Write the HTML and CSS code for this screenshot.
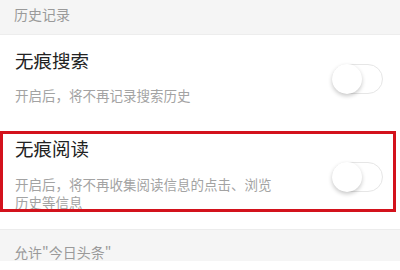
FILE: index.html
```html
<!DOCTYPE html>
<html lang="zh-CN">

<head>
  <meta charset="UTF-8">
  <title>历史记录</title>
  <link rel="stylesheet" href="styles.css">
</head>

<body>
  <div class="page">
    <div class="group-title">历史记录</div>
    <div class="list">
      <div class="item">
        <div class="item-text">
          <div class="item-name">无痕搜索</div>
          <div class="item-desc">开启后，将不再记录搜索历史</div>
        </div>
        <div class="switch"><span class="knob"></span></div>
      </div>
      <div class="item item-last">
        <div class="item-text">
          <div class="item-name">无痕阅读</div>
          <div class="item-desc">开启后，将不再收集阅读信息的点击、浏览历史等信息</div>
        </div>
        <div class="switch"><span class="knob"></span></div>
      </div>
      <!-- 标注框 -->
      <div class="mark"></div>
    </div>
    <div class="group-title group-bottom">允许&quot;今日头条&quot;</div>
  </div>
</body>

</html>
```

FILE: styles.css
```css
* {
  margin: 0;
  padding: 0;
  box-sizing: border-box;
}

body {
  background-color: #fff;
  font-family: "Noto Sans CJK SC", "Noto Sans", sans-serif;
}

.page {
  width: 400px;
  height: 270px;
  overflow: hidden;
}

.group-title {
  height: 35px;
  padding: 0 14px;
  line-height: 28px;
  font-size: 14px;
  color: #9a9a9a;
  background-color: #f5f5f5;
  border-bottom: 1px solid #ededed;
}

.group-bottom {
  height: auto;
  padding-top: 13px;
  line-height: 18px;
  border-bottom: none;
  border-top: 1px solid #ececec;
}

.list {
  position: relative;
  background-color: #fff;
}

.item {
  display: flex;
  align-items: center;
  padding: 13px 17px 27px 15px;
}

.item-last {
  padding-top: 5px;
  padding-bottom: 18px;
}

.item-last .item-desc {
  margin-top: 15px;
}

.item-text {
  flex: 1;
}

.item-name {
  font-size: 18.5px;
  line-height: 24px;
  color: #222;
}

.item-desc {
  width: 264px;
  margin-top: 14px;
  font-size: 13.5px;
  line-height: 18px;
  color: #a3a3a3;
}

.switch {
  position: relative;
  width: 51px;
  height: 30px;
  margin-top: 6px;
  border: 1px solid #e6e6e6;
  border-radius: 15px;
  background-color: #fff;
}

.knob {
  position: absolute;
  left: -1px;
  top: -1px;
  width: 30px;
  height: 30px;
  border-radius: 50%;
  background-color: #fff;
  box-shadow: 0 2px 4px rgba(0, 0, 0, 0.22);
}

.mark {
  position: absolute;
  left: 0;
  top: 96px;
  width: 396px;
  height: 81px;
  border: 3px solid #d3121c;
}
```
